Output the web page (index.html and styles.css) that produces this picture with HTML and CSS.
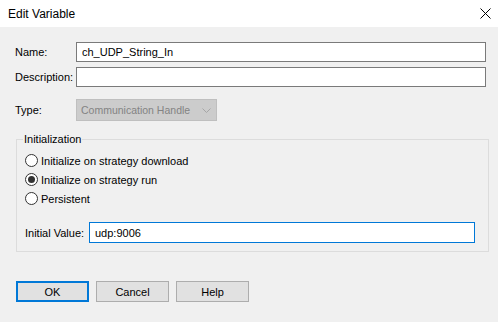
FILE: index.html
```html
<!DOCTYPE html>
<html lang="en">
<head>
  <meta charset="UTF-8" />
  <title>Edit Variable</title>
  <link rel="stylesheet" href="styles.css">
</head>
<body>

<!-- Title bar -->
<div class="titlebar">
  <span class="title">Edit Variable</span>
  <svg class="close" width="11" height="11" viewBox="0 0 11 11">
    <path d="M0.5 0.5 L10.5 10.5 M10.5 0.5 L0.5 10.5" stroke="#000" stroke-width="1" fill="none"/>
  </svg>
</div>

<!-- Dialog body -->
<div class="dialog">
  <div class="row">
    <label class="field-label" for="name">Name:</label>
    <input class="textbox" type="text" id="name" value="ch_UDP_String_In" />
  </div>
  <div class="row">
    <label class="field-label" for="desc">Description:</label>
    <input class="textbox" type="text" id="desc" value="" />
  </div>
  <div class="row type-row">
    <span class="field-label">Type:</span>
    <div class="combo disabled">
      <span>Communication Handle</span>
      <svg width="9" height="5" viewBox="0 0 9 5">
        <path d="M0.5 0.5 L4.5 4.5 L8.5 0.5" stroke="#a6a6a6" stroke-width="1" fill="none"/>
      </svg>
    </div>
  </div>

  <fieldset class="group">
    <legend>Initialization</legend>
    <div class="radio"><span class="dot"></span>Initialize on strategy download</div>
    <div class="radio"><span class="dot checked"></span>Initialize on strategy run</div>
    <div class="radio"><span class="dot"></span>Persistent</div>
    <div class="init-row">
      <label for="initval">Initial Value:</label>
      <input class="textbox focused" type="text" id="initval" value="udp:9006" />
    </div>
  </fieldset>

  <div class="buttons">
    <button class="btn default">OK</button>
    <button class="btn">Cancel</button>
    <button class="btn">Help</button>
  </div>
</div>

</body>
</html>
```

FILE: styles.css
```css
* {
  box-sizing: border-box;
  font-family: 'Liberation Sans', Arial, sans-serif;
}
body {
  margin: 0;
  width: 498px;
  height: 322px;
  background: #f0f0f0;
  color: #000;
  font-size: 11px;
  overflow: hidden;
}

.titlebar {
  height: 27px;
  background: #fff;
  display: flex;
  align-items: center;
  justify-content: space-between;
  padding: 0 7px 0 8px;
}
.title {
  font-size: 12px;
}
.close {
  display: block;
}

.dialog {
  padding: 15px 12px 0 15px;
}

.row {
  display: flex;
  align-items: center;
  margin-bottom: 5px;
}
.field-label {
  width: 61px;
  flex: none;
}
.textbox {
  flex: 1;
  height: 20px;
  border: 1px solid #7a7a7a;
  background: #fff;
  padding: 0 5px;
  font-size: 11px;
  outline: none;
  margin: 0;
}
.textbox.focused {
  border-color: #0078d7;
}

.type-row {
  margin-top: 12px;
  margin-bottom: 0;
}
.combo {
  width: 141px;
  height: 22px;
  display: flex;
  align-items: center;
  justify-content: space-between;
  padding: 0 5px 0 4px;
  white-space: nowrap;
  font-size: 10.5px;
}
.combo.disabled {
  background: #cccccc;
  border: 1px solid #bfbfbf;
  color: #838383;
}
.combo svg {
  display: block;
}

.group {
  margin: 12px -3px 0 1px;
  border: 1px solid #dcdcdc;
  padding: 6px 13px 8px 6px;
}
.group legend {
  padding: 0 1px;
}

.radio {
  display: flex;
  align-items: center;
  height: 19px;
  padding-left: 2px;
}
.dot {
  width: 13px;
  height: 13px;
  border: 1px solid #333;
  border-radius: 50%;
  background: #fff;
  margin-right: 3px;
  display: flex;
  align-items: center;
  justify-content: center;
}
.dot.checked::after {
  content: "";
  width: 7px;
  height: 7px;
  border-radius: 50%;
  background: #333;
}

.init-row {
  display: flex;
  align-items: center;
  margin-top: 14px;
  padding-left: 2px;
}
.init-row label {
  width: 64px;
  flex: none;
}
.init-row .textbox {
  height: 21px;
}

.buttons {
  display: flex;
  gap: 7px;
  margin-top: 29px;
  padding-left: 1px;
}
.btn {
  width: 73px;
  height: 21px;
  background: #e1e1e1;
  border: 1px solid #adadad;
  font-size: 11px;
  color: #000;
  padding: 0;
}
.btn.default {
  border: 2px solid #0078d7;
}
```
